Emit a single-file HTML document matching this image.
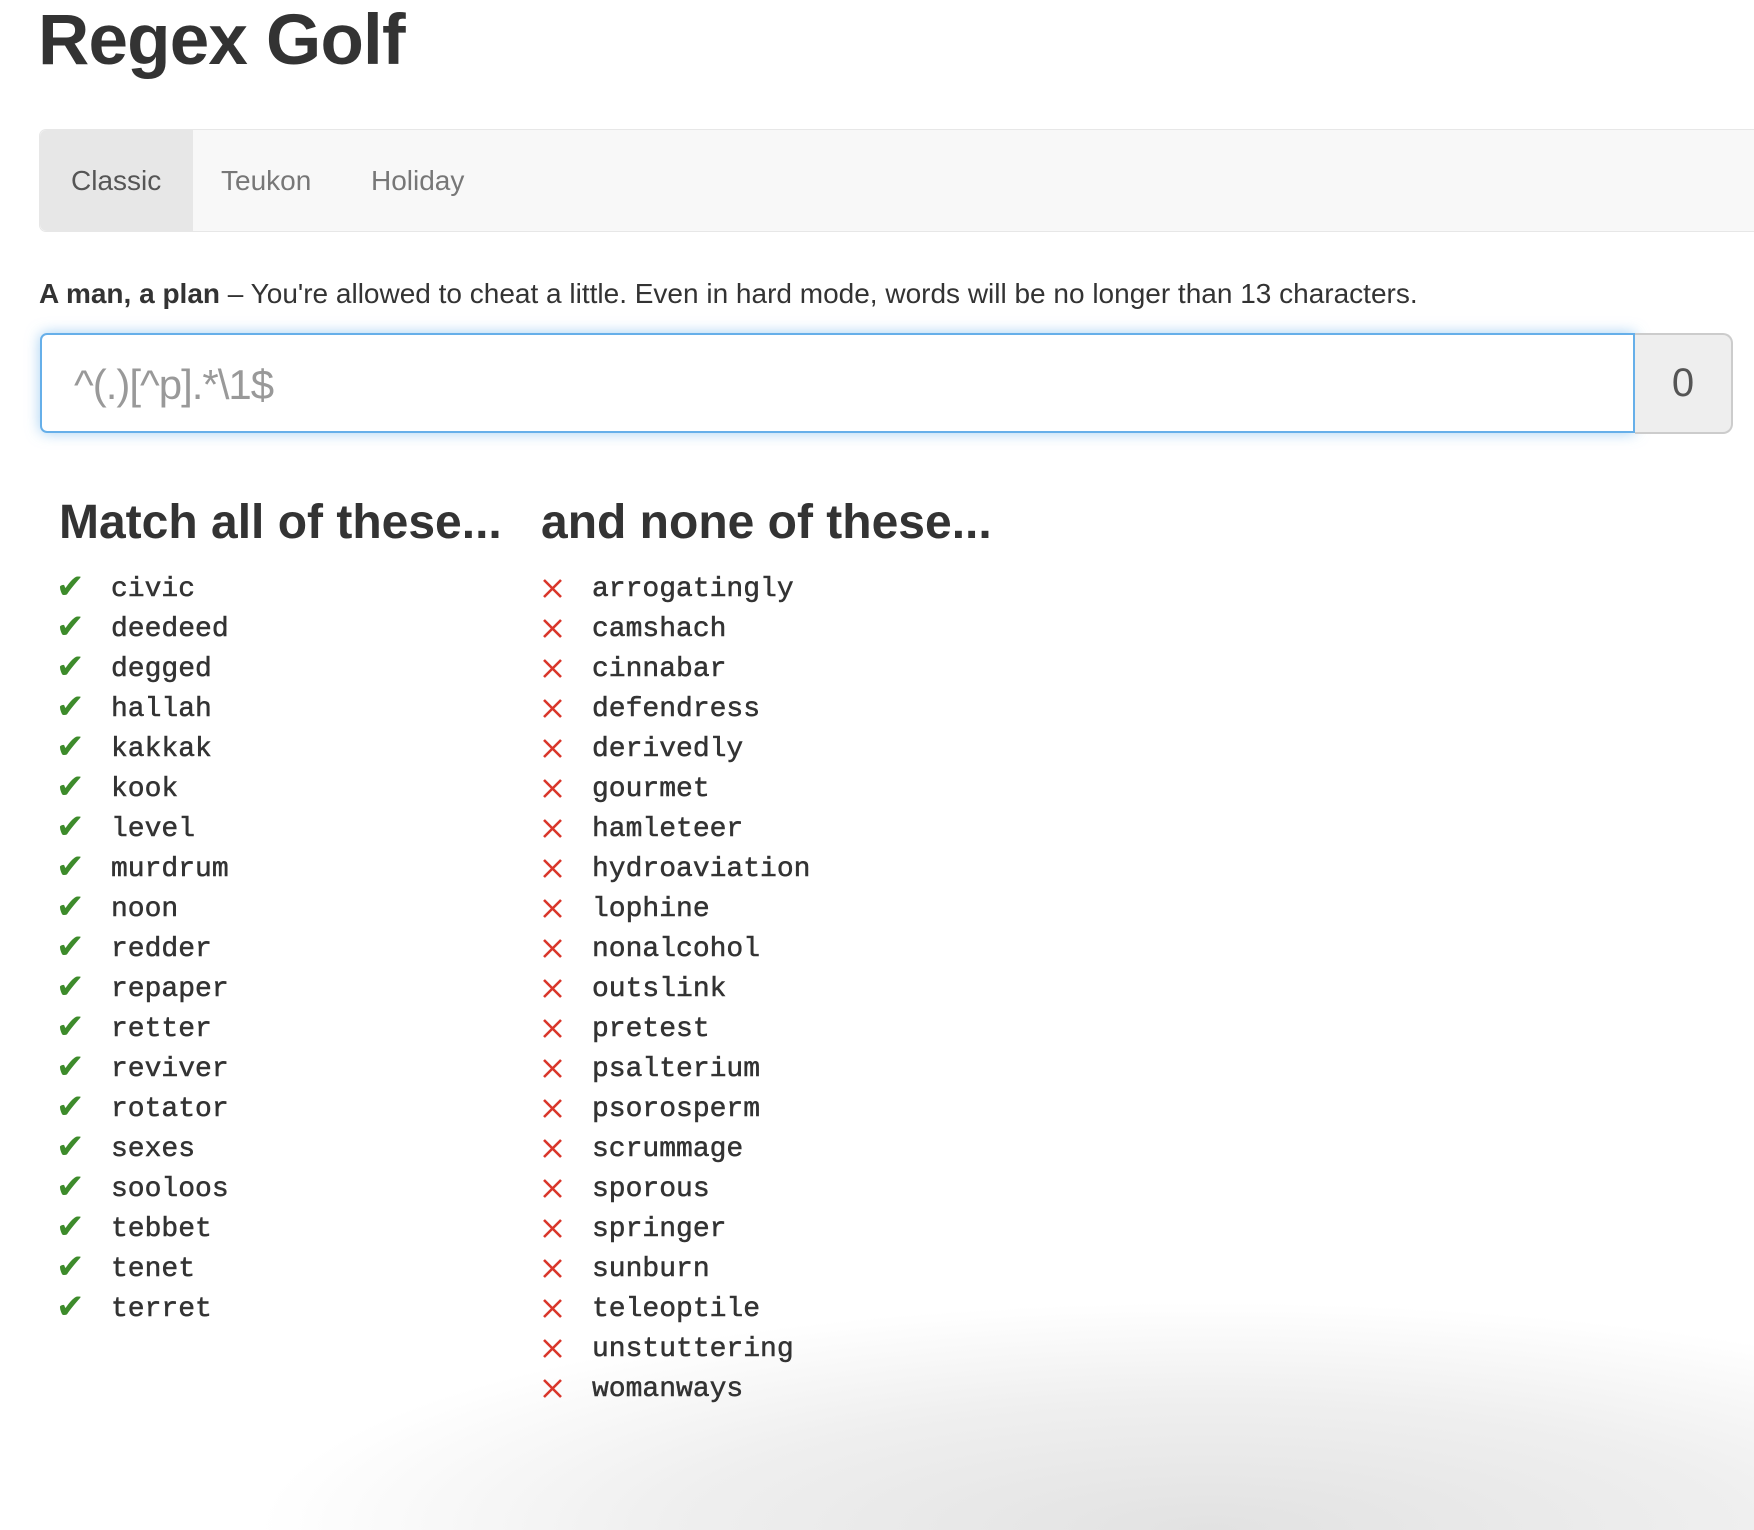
<!DOCTYPE html>
<html><head><meta charset="utf-8"><style>
body{margin:0;width:1754px;height:1406px;overflow:hidden;background:#fff;font-family:"Liberation Sans",sans-serif;color:#333;position:relative}
.a{position:absolute;white-space:nowrap}
h1{position:absolute;left:38px;top:0px;margin:0;font-size:71px;font-weight:bold;line-height:82px;letter-spacing:-0.8px}
.nav{position:absolute;left:39px;top:129px;width:1730px;height:101px;background:#f8f8f8;border:1px solid #e7e7e7;border-radius:7px}
.act{position:absolute;left:0;top:0;width:153px;height:101px;background:#e7e7e7;border-radius:7px 0 0 7px}
.nt{position:absolute;top:161px;font-size:28px;line-height:40px;color:#777}
.desc{left:39px;top:276px;font-size:28px;line-height:36px}
.inp{position:absolute;left:40px;top:333px;width:1591px;height:96px;border:2px solid #66afe9;border-radius:7px 0 0 7px;box-shadow:0 0 14px rgba(102,175,233,.6)}
.ph{left:74px;top:360px;font-size:42px;line-height:50px;color:#999;letter-spacing:-1px}
.add{position:absolute;left:1635px;top:333px;width:96px;height:97px;background:#eee;border:2px solid #ccc;border-left:none;border-radius:0 10px 10px 0;font-size:40px;line-height:97px;text-align:center;color:#555}
.h3{top:494px;font-size:48px;font-weight:bold;line-height:58px}
.w{font-family:"Liberation Mono",monospace;font-size:28px;line-height:40px;color:#333;-webkit-text-stroke:0.5px #333}
.ck{color:#3d8b2b;font-size:34px;line-height:40px;font-family:"DejaVu Sans",sans-serif;font-style:italic}
.shade{position:absolute;left:250px;top:1300px;width:1600px;height:230px;background:radial-gradient(ellipse at 60% 100%,#e2e2e2 0%,#efefef 40%,rgba(255,255,255,0) 70%)}
</style></head><body>
<div class="shade"></div>
<h1>Regex Golf</h1>
<div class="nav"><div class="act"></div></div>
<div class="a nt" style="left:71px;color:#555">Classic</div>
<div class="a nt" style="left:221px">Teukon</div>
<div class="a nt" style="left:371px">Holiday</div>
<div class="a desc"><b>A man, a plan</b> – You're allowed to cheat a little. Even in hard mode, words will be no longer than 13 characters.</div>
<div class="inp"></div>
<div class="a ph">^(.)[^p].*\1$</div>
<div class="add">0</div>
<div class="a h3" style="left:59px">Match all of these...</div>
<div class="a h3" style="left:541px">and none of these...</div>
<div id="L"></div>
<script>
var m="civic deedeed degged hallah kakkak kook level murdrum noon redder repaper retter reviver rotator sexes sooloos tebbet tenet terret".split(" ");
var n="arrogatingly camshach cinnabar defendress derivedly gourmet hamleteer hydroaviation lophine nonalcohol outslink pretest psalterium psorosperm scrummage sporous springer sunburn teleoptile unstuttering womanways".split(" ");
var h="";
m.forEach(function(w,i){var t=570+40*i;
h+='<div class="a ck" style="left:56px;top:'+(t-3)+'px">✔</div><div class="a w" style="left:111px;top:'+t+'px">'+w+'</div>';});
n.forEach(function(w,i){var t=570+40*i,c=t+18;
h+='<svg class="a" style="left:542px;top:'+(c-10)+'px" width="21" height="21" viewBox="0 0 21 21"><path d="M2 2L19 19M19 2L2 19" stroke="#d9362b" stroke-width="2.6" fill="none"/></svg><div class="a w" style="left:592px;top:'+t+'px">'+w+'</div>';});
document.getElementById("L").innerHTML=h;
</script>
</body></html>
